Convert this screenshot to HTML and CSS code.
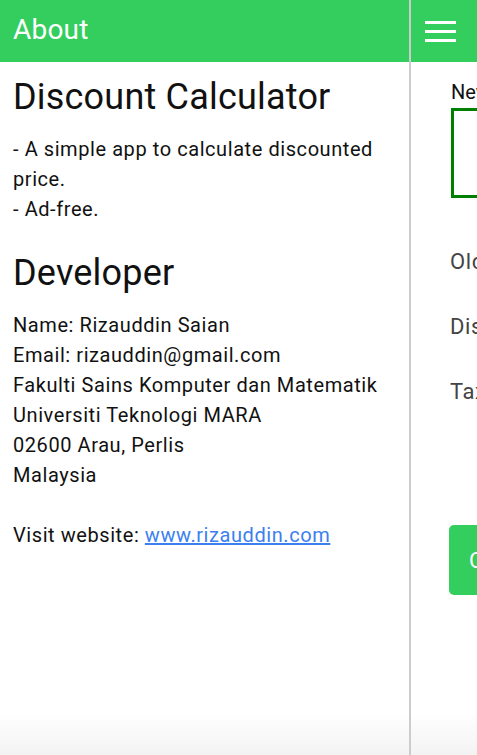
FILE: index.html
```html
<!DOCTYPE html>
<html>
<head>
    <title>Discount Calculator - About</title>
    <link rel="stylesheet" href="styles.css">
</head>
<body>
    <div class="screen">
        <aside class="about">
            <header class="bar">
                <h2 class="bar-title">About</h2>
            </header>
            <section class="about-body">
                <h1>Discount Calculator</h1>
                <p>- A simple app to calculate discounted price.<br>- Ad-free.</p>

                <h1>Developer</h1>
                <p>
                    Name: Rizauddin Saian<br>
                    Email: rizauddin@gmail.com<br>
                    Fakulti Sains Komputer dan Matematik<br>
                    Universiti Teknologi MARA<br>
                    02600 Arau, Perlis<br>
                    Malaysia
                </p>
                <p class="visit">Visit website: <a href="#">www.rizauddin.com</a></p>
            </section>
        </aside>

        <main class="calc">
            <header class="bar">
                <button class="menu-btn" type="button">
                    <svg width="31" height="21" viewBox="0 0 31 21">
                        <rect x="0" y="0" width="31" height="3" fill="#fff"/>
                        <rect x="0" y="9" width="31" height="3" fill="#fff"/>
                        <rect x="0" y="18" width="31" height="3" fill="#fff"/>
                    </svg>
                </button>
            </header>
            <div class="calc-body">
                <label class="result-label">New Price</label>
                <div class="result-box"></div>

                <div class="field">Old Price</div>
                <div class="field">Discount (%)</div>
                <div class="field">Tax (%)</div>

                <button class="calc-btn" type="button">Calculate</button>
            </div>
        </main>
    </div>
</body>
</html>
```

FILE: styles.css
```css
body { margin: 0; font-family: Roboto, "Noto Sans", sans-serif; color: #111; overflow: hidden; }
.screen { display: flex; height: 755px; width: 477px; overflow: hidden; }

.about, .calc { height: 100%; background: linear-gradient(to bottom, #fff calc(100% - 42px), #f3f3f3); }
.about { width: 409px; flex-shrink: 0; border-right: 2px solid #cccccc; }
.calc { flex: 1; min-width: 0; overflow: hidden; }

.bar { height: 62px; background: #34ce5e; display: flex; align-items: center; }
.bar-title { margin: 0 0 4px 13px; font-size: 28px; font-weight: 400; color: #fff; letter-spacing: 0.2px; }
.menu-btn { background: none; border: none; padding: 0; margin: 0 0 0 14px; display: flex; }

.about-body { padding: 0 13px; }
.about-body h1 { font-size: 36px; font-weight: 400; margin: 14px 0 16px; letter-spacing: 0.2px; }
.about-body h1 + p + h1 { margin-top: 28px; }
.about-body p { font-size: 20px; line-height: 30px; margin: 0 0 14px; letter-spacing: 0.57px; }
.about-body p.visit { margin-top: 30px; }
.about-body a { color: #3b7ff0; }

.calc-body { padding: 18px 0 0 40px; white-space: nowrap; }
.result-label { display: block; font-size: 20px; color: #111; }
.result-box { margin-top: 4px; width: 200px; height: 84px; border: 3px solid #008000; }
.field { font-size: 22px; color: #444; height: 65px; line-height: 65px; margin-left: -1px; letter-spacing: 0.6px; }
.result-box + .field { margin-top: 31px; }
.calc-btn { margin: 101px 0 0 -2px; width: 200px; height: 70px; border: none; border-radius: 5px; background: #34ce5e; color: #fff; font-family: inherit; font-size: 22px; text-align: left; padding-left: 20px; }
```
